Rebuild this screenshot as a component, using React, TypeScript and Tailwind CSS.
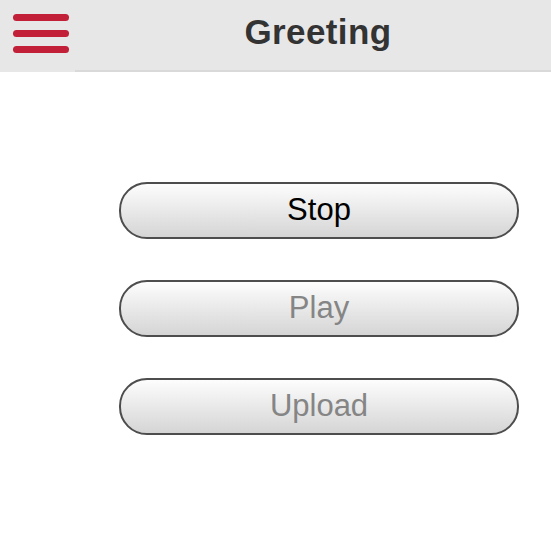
import React from 'react';

const buttons = [
    { label: 'Stop', enabled: true },
    { label: 'Play', enabled: false },
    { label: 'Upload', enabled: false },
];

const App: React.FC = () => {
    return (
        <div className="min-h-screen bg-white font-['Liberation_Sans',Arial,sans-serif]">
            {/* Header */}
            <div className="flex">
                <button className="w-[75px] h-[72px] bg-[#e7e7e7] flex flex-col items-start gap-[9px] pt-[14px] pl-[13px]">
                    <span className="block w-[56px] h-[7px] rounded-full bg-[#c21f38]" />
                    <span className="block w-[56px] h-[7px] rounded-full bg-[#c21f38]" />
                    <span className="block w-[56px] h-[7px] rounded-full bg-[#c21f38]" />
                </button>
                <div className="flex-1 h-[72px] bg-[#e7e7e7] border-b-2 border-[#d9d9d9] flex items-center justify-center pl-[10px] pb-[6px]">
                    <h1 className="text-[35px] font-bold text-[#333333] tracking-[0.4px]">Greeting</h1>
                </div>
            </div>

            {/* Buttons */}
            <div className="flex flex-col gap-[41px] pt-[110px] pl-[119px]">
                {buttons.map((b) => (
                    <button
                        key={b.label}
                        className={`w-[400px] h-[57px] rounded-[28px] border-2 border-[#4d4d4d] bg-gradient-to-b from-[#fdfdfd] to-[#d5d5d5] text-[31px] ${
                            b.enabled ? 'text-black' : 'text-[#858585]'
                        }`}
                    >
                        {b.label}
                    </button>
                ))}
            </div>
        </div>
    );
};

export default App;
